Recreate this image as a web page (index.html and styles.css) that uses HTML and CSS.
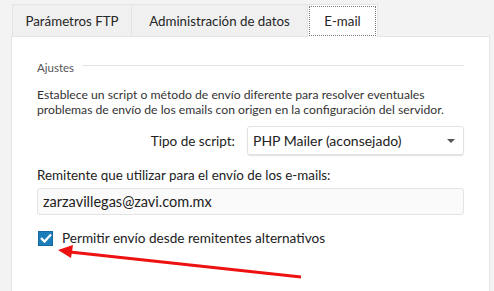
FILE: index.html
```html
<!DOCTYPE html>
<html lang="es">
<head>
    <meta charset="UTF-8">
    <title>E-mail</title>
    <link rel="stylesheet" href="styles.css">
</head>
<body>
    <div class="tabs">
        <div class="tab tab-ftp">Parámetros FTP</div>
        <div class="tab tab-datos">Administración de datos</div>
        <div class="tab tab-email active"><span>E-mail</span></div>
    </div>
    <div class="panel">
        <div class="legend"><span>Ajustes</span></div>
        <p class="desc">Establece un script o método de envío diferente para resolver eventuales<br>problemas de envío de los emails con origen en la configuración del servidor.</p>
        <div class="row">
            <label class="row-label">Tipo de script:</label>
            <div class="select">
                <span>PHP Mailer (aconsejado)</span>
                <span class="caret"></span>
            </div>
        </div>
        <label class="field-label">Remitente que utilizar para el envío de los e-mails:</label>
        <div class="input">zarzavillegas@zavi.com.mx</div>
        <div class="check-row">
            <span class="checkbox">
                <svg width="12" height="10" viewBox="0 0 12 10"><path d="M1 5 L4.5 8.5 L11 1.5" fill="none" stroke="#fff" stroke-width="2.4"/></svg>
            </span>
            <span>Permitir envío desde remitentes alternativos</span>
        </div>
    </div>
    <svg class="arrow" width="494" height="291" viewBox="0 0 494 291">
        <line x1="301" y1="277" x2="70" y2="252" stroke="#ee1111" stroke-width="3"/>
        <polygon points="58,250 73,245 71,258" fill="#ee1111"/>
    </svg>
</body>
</html>
```
FILE: styles.css
```css
body {
    margin: 0;
    background-color: #f3f3f3;
    font-family: Lato, "Noto Sans", sans-serif;
    color: #222;
    height: 291px;
    overflow: hidden;
    position: relative;
    display: flex;
    flex-direction: column;
}
.tabs {
    display: flex;
    padding: 4px 0 0 12px;
    height: 32px;
    flex-shrink: 0;
}
.tab {
    display: flex;
    align-items: center;
    justify-content: center;
    font-size: 13.3px;
    color: #262626;
    background-color: #f0f0f0;
    border: 1px solid #e4e4e4;
    border-bottom: none;
    margin-right: -1px;
    box-sizing: border-box;
}
.tab-ftp {
    width: 120px;
}
.tab-datos {
    width: 177px;
}
.tab-email {
    width: 71px;
}
.tab.active {
    background-color: #fff;
    padding: 1px;
    position: relative;
    z-index: 1;
    margin-bottom: -1px;
}
.tab.active span {
    display: flex;
    align-items: center;
    justify-content: center;
    width: 100%;
    height: 100%;
    border: 1px dotted #777;
    box-sizing: border-box;
}
.panel {
    flex: 1;
    margin: 0 4px 0 11px;
    background-color: #fff;
    border: 1px solid #e4e4e4;
    border-bottom: none;
    padding: 24px 25px 0 25px;
}
.legend {
    display: flex;
    align-items: center;
    font-size: 11.5px;
    color: #555;
}
.legend::after {
    content: "";
    flex: 1;
    border-top: 1px solid #e2e2e2;
    margin: 0 0 5px 8px;
}
.desc {
    margin: 13px 0 0 0;
    font-size: 12.2px;
    line-height: 15px;
    white-space: nowrap;
    color: #333;
}
.row {
    display: flex;
    align-items: center;
    margin-top: 9px;
}
.row-label {
    width: 198px;
    text-align: right;
    font-size: 13.5px;
    margin-right: 12px;
}
.select {
    display: flex;
    align-items: center;
    justify-content: space-between;
    width: 217px;
    height: 29px;
    box-sizing: border-box;
    padding: 0 8px 0 5px;
    border: 1px solid #e2e2e2;
    border-radius: 3px;
    box-shadow: 0 1px 1px rgba(0, 0, 0, 0.12);
    font-size: 14px;
}
.caret {
    border-left: 4px solid transparent;
    border-right: 4px solid transparent;
    border-top: 4px solid #555;
}
.field-label {
    display: block;
    margin-top: 12px;
    font-size: 13.4px;
}
.input {
    margin-top: 5px;
    height: 27px;
    box-sizing: border-box;
    padding: 0 5px;
    display: flex;
    align-items: center;
    background-color: #fafafa;
    border: 1px solid #e4e4e4;
    border-radius: 3px;
    font-size: 14.5px;
}
.check-row {
    display: flex;
    align-items: center;
    margin-top: 15px;
    font-size: 13.6px;
}
.checkbox {
    width: 15px;
    height: 15px;
    box-sizing: border-box;
    background-color: #1c7dbb;
    border: 1px solid #176a9f;
    display: flex;
    align-items: center;
    justify-content: center;
    margin: 0 9px 0 1px;
}
.arrow {
    position: absolute;
    left: 0;
    top: 0;
}
```
